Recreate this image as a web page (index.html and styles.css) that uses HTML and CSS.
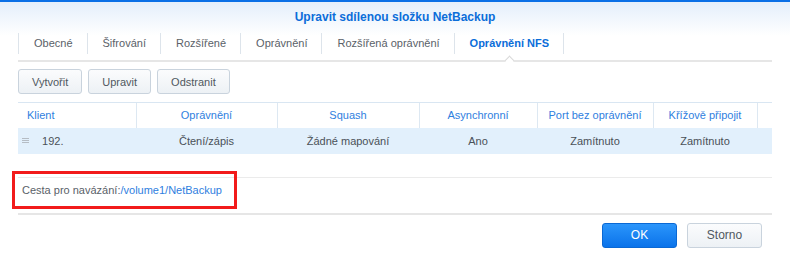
FILE: index.html
```html
<!DOCTYPE html>
<html lang="cs">
<head>
  <meta charset="UTF-8" />
  <title>Upravit sdílenou složku NetBackup</title>
  <link rel="stylesheet" href="styles.css">
</head>
<body>
  <div class="dialog">
    <header class="title">Upravit sdílenou složku NetBackup</header>

    <nav class="tabs">
      <span class="tab">Obecné</span>
      <span class="tab">Šifrování</span>
      <span class="tab">Rozšířené</span>
      <span class="tab">Oprávnění</span>
      <span class="tab">Rozšířená oprávnění</span>
      <span class="tab active">Oprávnění NFS</span>
    </nav>

    <div class="toolbar">
      <button type="button" class="btn">Vytvořit</button>
      <button type="button" class="btn">Upravit</button>
      <button type="button" class="btn">Odstranit</button>
    </div>

    <table class="grid">
      <colgroup>
        <col class="c-client"><col class="c-perm"><col class="c-squash"><col class="c-async"><col class="c-port"><col class="c-cross"><col>
      </colgroup>
      <thead>
        <tr>
          <th class="left">Klient</th>
          <th>Oprávnění</th>
          <th>Squash</th>
          <th>Asynchronní</th>
          <th>Port bez oprávnění</th>
          <th>Křížově připojit</th>
          <th></th>
        </tr>
      </thead>
      <tbody>
        <tr class="selected">
          <td class="left">
            <svg class="handle" width="7" height="6" viewBox="0 0 7 6"><path d="M0 .5h7M0 2.5h7M0 4.5h7" stroke="#b5bcc4" stroke-width="1"/></svg>
            192.
          </td>
          <td>Čtení/zápis</td>
          <td>Žádné mapování</td>
          <td>Ano</td>
          <td>Zamítnuto</td>
          <td>Zamítnuto</td>
          <td></td>
        </tr>
      </tbody>
    </table>

    <div class="mount">
      <span class="mark"></span>
      Cesta pro navázání:<span class="path">/volume1/NetBackup</span>
    </div>

    <footer class="actions">
      <button type="button" class="btn primary">OK</button>
      <button type="button" class="btn">Storno</button>
    </footer>
  </div>
</body>
</html>
```

FILE: styles.css
```css
:root {
  --blue: #0b6dd9;
  --link: #2f80e0;
  --text: #4e5760;
  --line: #e6e6e6;
  --sep: #dde4eb;
}

*, *::before, *::after {
  box-sizing: border-box;
}
body {
  margin: 0;
  background: #fff;
  font-family: "Liberation Sans", Arial, sans-serif;
  font-size: 11px;
  color: var(--text);
}

.dialog {
  border-top: 2px solid #0a6fe6;
  background: linear-gradient(#e4eefb 0, #fff 34px);
  height: 257px;
}

.title {
  height: 31px;
  line-height: 31px;
  text-align: center;
  font-size: 12px;
  font-weight: 700;
  color: var(--blue);
}

.tabs {
  display: flex;
  margin: 0 18px;
  padding-bottom: 6px;
  border-bottom: 2px solid var(--line);
}
.tab {
  position: relative;
  height: 21px;
  line-height: 21px;
  padding: 0 14px 0 15px;
  border-left: 1px solid var(--sep);
  color: #5a6168;
}
.tab:last-child {
  border-right: 1px solid var(--sep);
}
.tab.active {
  color: var(--blue);
  font-weight: 700;
}
.tab.active::after {
  content: '';
  position: absolute;
  left: 50%;
  bottom: -10px;
  width: 7px;
  height: 7px;
  margin-left: -3px;
  background: #fff;
  border-left: 1px solid #d9d9d9;
  border-top: 1px solid #d9d9d9;
  transform: rotate(45deg);
}

.btn {
  height: 25px;
  padding: 0 13px;
  font-family: inherit;
  font-size: 11px;
  color: #505860;
  border: 1px solid #c9d3dd;
  border-radius: 3px;
  background: linear-gradient(#fbfcfd, #edf1f5);
}
.btn.primary {
  color: #fff;
  border-color: #0a68d4;
  background: linear-gradient(#2b95fb, #0a73ea);
}

.toolbar {
  display: flex;
  gap: 6px;
  margin: 7px 18px 0;
}

.grid {
  width: 754px;
  margin: 8px 18px 0;
  border-collapse: collapse;
  table-layout: fixed;
}
.c-client { width: 118px; }
.c-perm { width: 141px; }
.c-squash { width: 142px; }
.c-async { width: 118px; }
.c-port { width: 116px; }
.c-cross { width: 104px; }

.grid th {
  height: 25px;
  padding: 0;
  border-top: 1px solid #d9e6f2;
  border-left: 1px solid #dde8f2;
  font-weight: 400;
  color: var(--link);
  text-align: center;
}
.grid th:first-child {
  border-left: 0;
}
.grid td {
  height: 26px;
  padding: 0;
  text-align: center;
  color: #4a5158;
}
.grid .left {
  text-align: left;
  padding-left: 9px;
}
.grid tr.selected td {
  background: #e2f0fc;
}
.grid td.left {
  padding-left: 4px;
}
.handle {
  margin-right: 10px;
  vertical-align: 1px;
}

.mount {
  position: relative;
  margin: 23px 18px 0;
  padding: 5px 4px 0;
  height: 38px;
  line-height: 14px;
  border-top: 1px solid #ebebeb;
  border-bottom: 2px solid var(--line);
  color: #5a6168;
}
.mount .path {
  color: var(--link);
}
.mark {
  position: absolute;
  left: -6px;
  top: -7px;
  width: 225px;
  height: 38px;
  border: 3px solid #f21b1b;
}

.actions {
  display: flex;
  justify-content: flex-end;
  gap: 10px;
  margin: 8px 28px 0;
}
.actions .btn {
  width: 75px;
  font-size: 12px;
}
```
